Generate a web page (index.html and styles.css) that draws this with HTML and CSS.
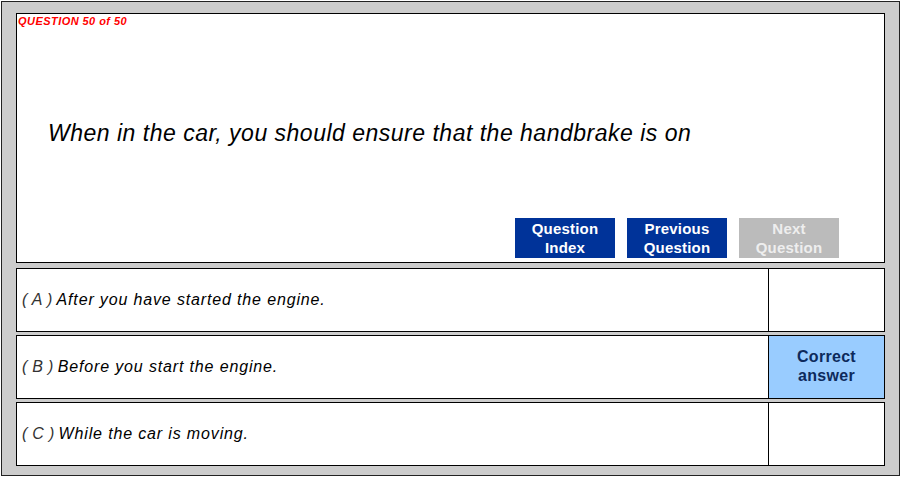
FILE: index.html
```html
<!DOCTYPE html>
<html lang="en">
<head>
    <meta charset="UTF-8">
    <title>Question 50 of 50</title>
    <link rel="stylesheet" href="styles.css">
</head>
<body>
    <div class="frame">
        <div class="question">
            <p class="qnum">QUESTION 50 of 50</p>
            <p class="qtext">When in the car, you should ensure that the handbrake is on</p>
            <div class="nav">
                <span class="btn">Question<br>Index</span>
                <span class="btn">Previous<br>Question</span>
                <span class="btn off">Next<br>Question</span>
            </div>
        </div>
        <div class="option">
            <div class="answer"><span class="letter">( A )</span> After you have started the engine.</div>
            <div class="mark"></div>
        </div>
        <div class="option">
            <div class="answer"><span class="letter">( B )</span> Before you start the engine.</div>
            <div class="mark right">Correct<br>answer</div>
        </div>
        <div class="option">
            <div class="answer"><span class="letter">( C )</span> While the car is moving.</div>
            <div class="mark"></div>
        </div>
    </div>
</body>
</html>
```

FILE: styles.css
```css
*{
    margin: 0;
    padding: 0;
    box-sizing: border-box;
}
body{
    background: #fff;
    font-family: "Liberation Sans", Arial, sans-serif;
}
.frame{
    width: 899px;
    height: 475px;
    margin: 1px 0 0 1px;
    border: 1px solid #222;
    background: #ccc;
    padding: 11px 14px 0 14px;
    display: flex;
    flex-direction: column;
}
.question{
    height: 250px;
    border: 1px solid #000;
    background: #fff;
    display: flex;
    flex-direction: column;
}
.qnum{
    font-size: 11px;
    line-height: 13px;
    font-weight: bold;
    font-style: italic;
    letter-spacing: 0.45px;
    color: #f00;
    padding: 1px 0 0 1px;
}
.qtext{
    margin-top: 92px;
    padding-left: 31px;
    font-size: 23px;
    line-height: 26px;
    font-style: italic;
    letter-spacing: 0.5px;
    color: #000;
}
.nav{
    margin-top: auto;
    display: flex;
    justify-content: flex-end;
    gap: 12px;
    padding: 0 45px 4px 0;
}
.btn{
    width: 100px;
    height: 40px;
    padding-top: 1px;
    background: #003399;
    color: #fff;
    font-size: 15px;
    font-weight: bold;
    line-height: 19px;
    letter-spacing: 0.2px;
    text-align: center;
}
.btn.off{
    background: #bbb;
    color: #eee;
}
.option{
    height: 64px;
    margin-top: 3px;
    border: 1px solid #000;
    background: #fff;
    display: flex;
}
.question + .option{
    margin-top: 5px;
}
.answer{
    flex: 1;
    display: flex;
    align-items: center;
    gap: 4px;
    padding-left: 5px;
    font-size: 16px;
    font-style: italic;
    letter-spacing: 0.85px;
    color: #000;
}
.letter{
    color: #333;
    letter-spacing: 0.3px;
}
.mark{
    width: 116px;
    border-left: 1px solid #000;
}
.mark.right{
    background: #99ccff;
    color: #0d2a5c;
    font-size: 16px;
    font-weight: bold;
    line-height: 19px;
    letter-spacing: 0.3px;
    text-align: center;
    padding-top: 11px;
}
```
